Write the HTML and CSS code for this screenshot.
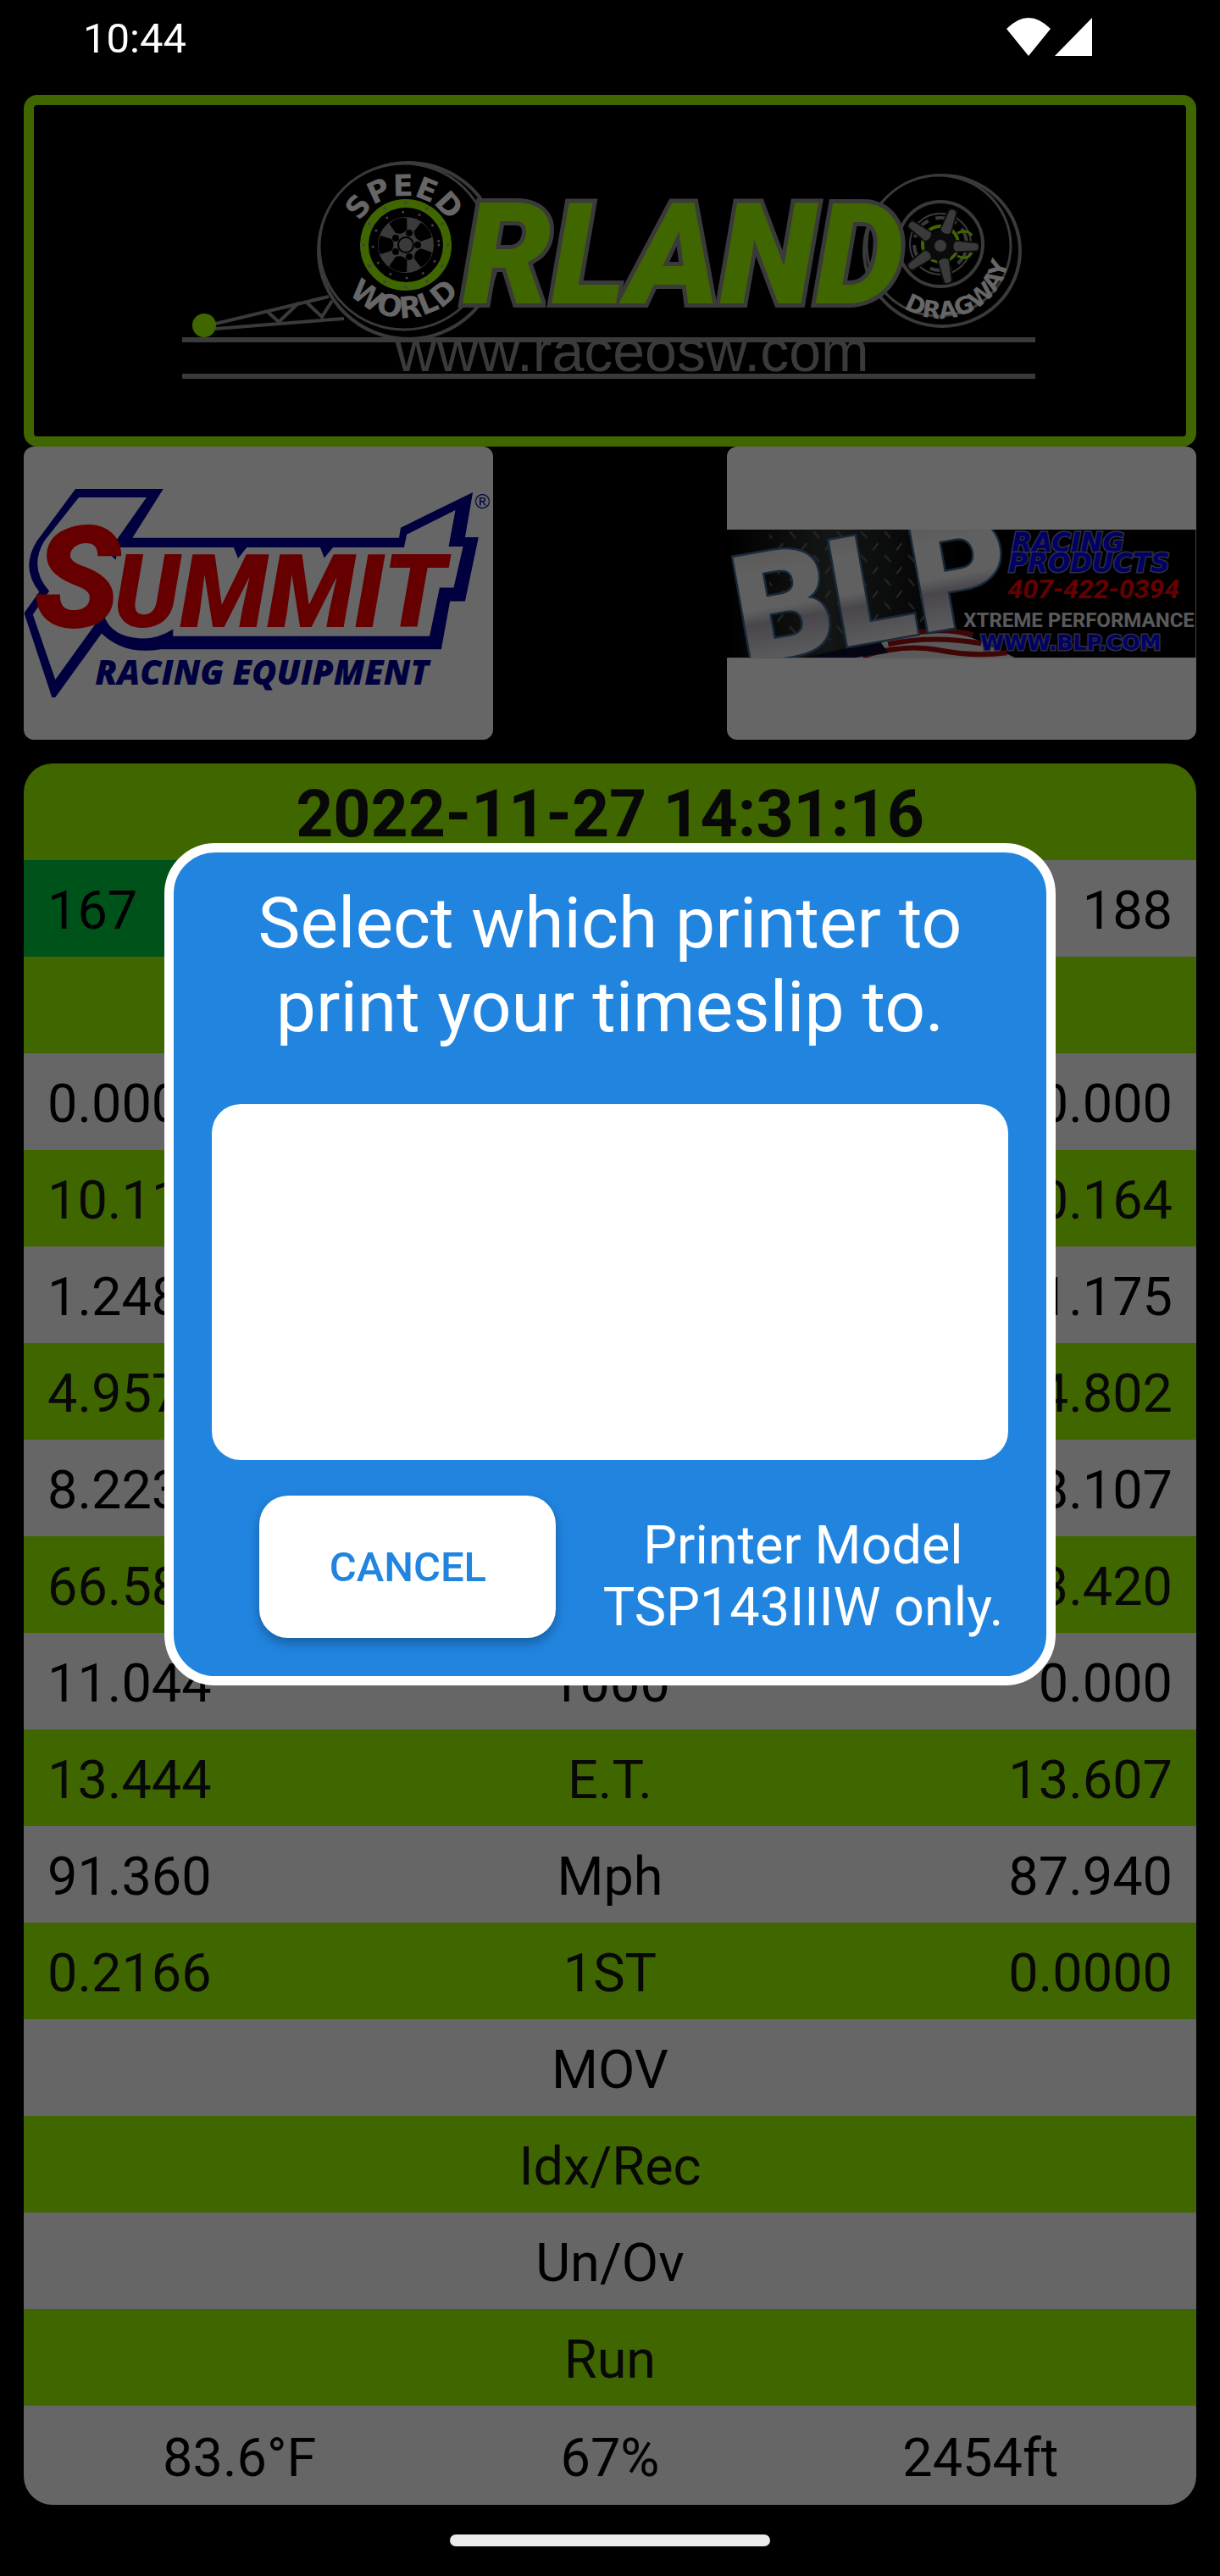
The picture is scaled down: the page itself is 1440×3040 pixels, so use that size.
FILE: index.html
```
<!DOCTYPE html>
<html lang="en">
<head>
    <meta charset="UTF-8">
    <meta name="viewport" content="width=device-width, initial-scale=1.0">
    <title>Timeslip</title>
    <link rel="stylesheet" href="styles.css">
</head>
<body>
    <div class="status-bar">
        <span>10:44</span>
        <svg class="status-icons" viewBox="0 0 102 46" aria-hidden="true">
            <path d="M0 13 Q26 -13 52 13 L26 45 Z" fill="#fff"/>
            <path d="M101 0 V45 H57 Z" fill="#fff"/>
        </svg>
    </div>

    <main>
        <!-- Track banner -->
        <div class="banner">
            <svg viewBox="40 124 1360 391" role="img" aria-label="Speed World Orlando Dragway">
                <defs>
                    <path id="speedArc" d="M417 291 A60 60 0 0 1 537 291"/>
                    <path id="worldArc" d="M391 289 A86 86 0 0 0 563 289"/>
                    <path id="dragwayArc" d="M1031 310 A80 80 0 0 0 1190 280"/>
                    <g id="rivets" fill="#aaa">
                        <circle cx="0" cy="-50" r="2"/>
                        <circle cx="25" cy="-43" r="2"/>
                        <circle cx="43" cy="-25" r="2"/>
                    </g>
                    <path id="hole" d="M-11 -30 Q0 -35 11 -30 L7 -17 Q0 -12 -7 -17 Z"/>
                    <g id="spoke">
                        <path d="M-8 -12 L-6 -46 H6 L8 -12 Z" fill="#1c1c1e"/>
                        <path d="M-6 -18 L-4 -43 Q0 -47 4 -43 L6 -18 Q0 -13 -6 -18 Z" fill="#919195"/>
                    </g>
                </defs>

                <g fill="none" stroke="#919195" stroke-width="4">
                    <path d="M254 382 L388 350 M254 388 L406 376 M316 368 L329 380 L353 357 M362 357 L380 374 L392 355"/>
                    <ellipse cx="482" cy="296" rx="106" ry="104"/>
                    <ellipse cx="477" cy="291" rx="100" ry="98" fill="#000" stroke-width="3"/>
                </g>
                <circle cx="241" cy="384" r="14" fill="#a0ff00"/>

                <circle cx="479" cy="289" r="49" fill="none" stroke="#a0ff00" stroke-width="10"/>
                <g transform="translate(479 289)">
                    <use href="#rivets"/>
                    <use href="#rivets" transform="rotate(90)"/>
                    <use href="#rivets" transform="rotate(180)"/>
                    <use href="#rivets" transform="rotate(270)"/>
                    <circle r="39" fill="none" stroke="#aaa" stroke-width="3" stroke-dasharray="0 20" stroke-linecap="round"/>
                    <circle r="33" fill="#919195"/>
                    <g fill="#000">
                        <use href="#hole" transform="rotate(-18)"/>
                        <use href="#hole" transform="rotate(54)"/>
                        <use href="#hole" transform="rotate(126)"/>
                        <use href="#hole" transform="rotate(198)"/>
                        <use href="#hole" transform="rotate(270)"/>
                        <circle cx="14" cy="0" r="4"/>
                        <circle cx="4" cy="-14" r="4"/>
                        <circle cx="-12" cy="-8" r="4"/>
                        <circle cx="-12" cy="8" r="4"/>
                        <circle cx="4" cy="14" r="4"/>
                    </g>
                    <circle r="9" fill="#919195" stroke="#000" stroke-width="2"/>
                </g>
                <text class="tyre-text"><textPath href="#speedArc" startOffset="50%">SPEED</textPath></text>
                <text class="tyre-text"><textPath href="#worldArc" startOffset="50%">WORLD</textPath></text>

                <g fill="none" stroke="#919195">
                    <ellipse cx="1112" cy="296" rx="92" ry="89" stroke-width="4"/>
                    <ellipse cx="1108" cy="290" rx="85" ry="83" fill="#000" stroke-width="3"/>
                    <circle cx="1110" cy="288" r="50" stroke-width="4"/>
                    <circle cx="1110" cy="288" r="36" stroke-width="2"/>
                    <circle cx="1110" cy="288" r="31" stroke-width="4" stroke-dasharray="26 9"/>
                    <circle cx="1110" cy="288" r="21" stroke="#a0ff00" stroke-width="4"/>
                    <path d="M1130 275 Q1142 270 1147 278 M1130 302 Q1142 308 1147 298" stroke="#a0ff00" stroke-width="3"/>
                </g>
                <g transform="translate(1110 290)">
                    <circle r="18" fill="#1c1c1e"/>
                    <use href="#spoke" transform="rotate(20)"/>
                    <use href="#spoke" transform="rotate(92)"/>
                    <use href="#spoke" transform="rotate(168)"/>
                    <use href="#spoke" transform="rotate(235)"/>
                    <use href="#spoke" transform="rotate(306)"/>
                    <circle r="7" fill="#919195"/>
                </g>
                <text class="dragway-text"><textPath href="#dragwayArc" startOffset="57%">DRAGWAY</textPath></text>

                <text class="orlando-text" x="546" y="358">RLAND</text>

                <path d="M215 401 H1222 M215 444 H1222" stroke="#919195" stroke-width="6"/>
                <text class="url-text" x="746" y="438">www.raceosw.com</text>
            </svg>
        </div>

        <!-- Sponsors -->
        <div class="sponsors">
            <a class="sponsor" href="#summit">
                <svg viewBox="0 0 553 346" role="img" aria-label="Summit Racing Equipment">
                    <g transform="translate(-28 -17) scale(0.3954 0.3333)">
                        <path fill="#00009c" d="M225 201 H487 L395 374 H1190 L1195 338 L1410 213 L1387 372 H1427 L1387 598 H1342 L1316 768 H480 Q370 790 303 712 L165 938 H155 L72 640 L117 565 Q60 480 110 385 Z"/>
                        <path fill="#fff" d="M235 231 H437 L322 425 L345 452 L353 408 H697 L710 447 L736 408 H955 L967 445 L993 408 H1205 L1213 362 L1358 276 L1338 405 H1381 L1353 550 H1311 L1281 722 H516 V697 Q460 740 400 727 Q325 715 308 640 L165 875 L98 645 L147 562 Q85 480 132 385 Z"/>
                    </g>
                    <text class="summit-s" x="12" y="213">S</text>
                    <text class="summit-text" x="106" y="213">UMMIT</text>
                    <text class="summit-sub" x="281" y="281">RACING EQUIPMENT</text>
                    <text class="summit-reg" x="532" y="73">®</text>
                </svg>
            </a>
            <a class="sponsor" href="#blp">
                <svg viewBox="0 0 553 346" role="img" aria-label="BLP Racing Products">
                    <defs>
                        <clipPath id="blpClip"><rect x="0" y="98" width="553" height="151"/></clipPath>
                        <linearGradient id="steel" x1="0" y1="0" x2="0" y2="1">
                            <stop offset="0.1" stop-color="#d8d8d8"/>
                            <stop offset="0.3" stop-color="#f0f0f0"/>
                            <stop offset="0.5" stop-color="#f0f0f0"/>
                            <stop offset="0.58" stop-color="#b5b0bd"/>
                            <stop offset="0.85" stop-color="#f4f4f4"/>
                        </linearGradient>
                        <linearGradient id="plateFade" x1="0" y1="0" x2="1" y2="0">
                            <stop offset="0" stop-color="#000"/>
                            <stop offset="0.3" stop-color="#333836"/>
                            <stop offset="0.7" stop-color="#000"/>
                        </linearGradient>
                        <pattern id="tread" width="28" height="28" patternUnits="userSpaceOnUse">
                            <path d="M4 10 L10 2 M18 16 L25 24" stroke="#666" stroke-width="2"/>
                        </pattern>
                    </defs>
                    <g clip-path="url(#blpClip)">
                        <rect x="0" y="98" width="553" height="151" fill="#000"/>
                        <rect x="0" y="98" width="400" height="151" fill="url(#plateFade)"/>
                        <rect x="50" y="98" width="190" height="130" fill="url(#tread)"/>
                        <path fill="#e0e0e0" d="M150 249 Q190 222 230 219 Q270 215 300 230 L340 249 Z"/>
                        <path fill="none" stroke="#a01010" stroke-width="6" d="M160 247 Q210 232 250 240 T330 243 M190 233 Q240 222 300 232 M225 219 Q260 214 290 222"/>
                        <path fill="#0c0c30" d="M90 249 L180 229 L190 243 L150 249 Z"/>
                        <text class="blp-text" x="20" y="257" transform="rotate(-10 20 257)">BLP</text>
                    </g>
                    <text class="blp-blue" x="336" y="124">RACING</text>
                    <text class="blp-blue" x="332" y="148">PRODUCTS</text>
                    <text class="blp-phone" x="331" y="179">407-422-0394</text>
                    <text class="blp-xtreme" x="279" y="213">XTREME PERFORMANCE</text>
                    <text class="blp-web" x="299" y="240">WWW.BLP.COM</text>
                </svg>
            </a>
        </div>

        <!-- Timeslip -->
        <div class="timeslip">
            <table>
                <thead>
                    <tr><th colspan="3">2022-11-27 14:31:16</th></tr>
                </thead>
                <tbody>
                    <tr><td class="winner">167</td><td></td><td>188</td></tr>
                    <tr><td></td><td></td><td></td></tr>
                    <tr><td>0.000</td><td></td><td>0.000</td></tr>
                    <tr><td>10.11</td><td></td><td>10.164</td></tr>
                    <tr><td>1.248</td><td></td><td>1.175</td></tr>
                    <tr><td>4.957</td><td></td><td>4.802</td></tr>
                    <tr><td>8.223</td><td></td><td>8.107</td></tr>
                    <tr><td>66.58</td><td></td><td>83.420</td></tr>
                    <tr><td>11.044</td><td>1000</td><td>0.000</td></tr>
                    <tr><td>13.444</td><td>E.T.</td><td>13.607</td></tr>
                    <tr><td>91.360</td><td>Mph</td><td>87.940</td></tr>
                    <tr><td>0.2166</td><td>1ST</td><td>0.0000</td></tr>
                    <tr><td></td><td>MOV</td><td></td></tr>
                    <tr><td></td><td>Idx/Rec</td><td></td></tr>
                    <tr><td></td><td>Un/Ov</td><td></td></tr>
                    <tr><td></td><td>Run</td><td></td></tr>
                </tbody>
            </table>
            <div class="weather">
                <span>83.6°F</span>
                <span>67%</span>
                <span>2454ft</span>
            </div>
        </div>
    </main>

    <div class="nav-bar"><div class="nav-pill"></div></div>

    <div class="overlay">
        <div class="modal" role="dialog" aria-labelledby="modalTitle">
            <h2 id="modalTitle">Select which printer to print your timeslip to.</h2>
            <div class="printer-list"></div>
            <div class="modal-footer">
                <button type="button">CANCEL</button>
                <p>Printer Model TSP143IIIW only.</p>
            </div>
        </div>
    </div>
</body>
</html>
```
FILE: styles.css
```
* {
    box-sizing: border-box;
}

body {
    font-family: Roboto, sans-serif;
    margin: 0;
    background: #000;
    color: #000;
    min-height: 100vh;
    display: flex;
    flex-direction: column;
}

.status-bar {
    height: 112px;
    padding: 18px 150px 0 98px;
    display: flex;
    justify-content: space-between;
    align-items: flex-start;
    color: #fff;
    font-size: 49px;
    line-height: 56px;
    position: relative;
    z-index: 2;
}

.status-icons {
    width: 102px;
    height: 46px;
    margin-top: 3px;
}

main {
    padding: 0 28px;
}

main svg {
    display: block;
    width: 100%;
}

.banner {
    border: 12px solid #a0ff00;
    border-radius: 16px;
}

.tyre-text,
.dragway-text {
    font-family: "DejaVu Sans", sans-serif;
    font-weight: bold;
    text-anchor: middle;
    fill: #fff;
}

.tyre-text {
    font-size: 35px;
}

.dragway-text {
    font-size: 28px;
}

.orlando-text {
    font-family: Roboto, sans-serif;
    font-weight: 900;
    font-style: italic;
    font-size: 166px;
    fill: #a0ff00;
    stroke: #919195;
    stroke-width: 10px;
    paint-order: stroke;
}

.url-text {
    font-family: "Liberation Sans", sans-serif;
    font-size: 68px;
    text-anchor: middle;
    fill: #919195;
}

.sponsors {
    display: flex;
    justify-content: space-between;
    margin-bottom: 28px;
}

.sponsor {
    width: 40%;
    background: #fff;
    border-radius: 12px;
    overflow: hidden;
}

.summit-s,
.summit-text {
    font-family: Roboto, sans-serif;
    font-weight: 900;
    font-style: italic;
    fill: #ff0000;
}

.summit-s {
    font-size: 168px;
}

.summit-text {
    font-size: 121px;
}

.summit-sub {
    font-family: "Open Sans", sans-serif;
    font-weight: 800;
    font-style: italic;
    font-size: 40px;
    text-anchor: middle;
    fill: #00009c;
}

.summit-reg {
    font-family: "Liberation Sans", sans-serif;
    font-size: 24px;
    fill: #00009c;
}

.blp-text {
    font-family: Roboto, sans-serif;
    font-weight: 900;
    font-size: 178px;
    fill: url(#steel);
    stroke: #3a6a94;
    stroke-width: 5px;
    paint-order: stroke;
}

.blp-blue,
.blp-web {
    font-family: "DejaVu Sans", sans-serif;
    font-weight: bold;
    fill: #0000ff;
    stroke: #77779a;
    stroke-width: 3px;
    paint-order: stroke;
}

.blp-blue {
    font-style: italic;
    font-size: 31px;
}

.blp-web {
    font-size: 25px;
}

.blp-phone,
.blp-xtreme {
    font-family: Roboto, sans-serif;
    font-weight: bold;
}

.blp-phone {
    font-style: italic;
    font-size: 32px;
    fill: #ff0000;
}

.blp-xtreme {
    font-size: 24px;
    fill: #e0e0e0;
}

.timeslip {
    border-radius: 34px;
    overflow: hidden;
    font-size: 63px;
    line-height: 74px;
}

table {
    width: 100%;
    border-collapse: collapse;
    table-layout: fixed;
}

tr {
    height: 114px;
    background: #fff;
}

thead tr,
tbody tr:nth-child(even) {
    background: #a0ff00;
    color: #141414;
}

th,
td {
    padding: 6px 28px 0;
    text-align: center;
}

th {
    font-size: 77px;
    font-weight: bold;
}

td:first-child {
    text-align: left;
}

td:last-child {
    text-align: right;
}

.winner {
    background: #00cc44;
}

.weather {
    height: 117px;
    padding: 6px 36px 0;
    display: grid;
    grid-template-columns: repeat(3, 1fr);
    align-items: center;
    text-align: center;
    background: #fff;
}

.nav-bar {
    flex: 1;
    min-height: 83px;
    display: flex;
    justify-content: center;
    align-items: center;
    position: relative;
    z-index: 2;
}

.nav-pill {
    width: 378px;
    height: 14px;
    border-radius: 7px;
    background: #ebebeb;
}

.overlay {
    position: fixed;
    inset: 0;
    padding-bottom: 56px;
    background: rgba(0, 0, 0, 0.6);
    display: flex;
    justify-content: center;
    align-items: center;
    z-index: 1;
}

.modal {
    width: 73%;
    padding: 34px 45px 45px;
    border: 11px solid #fff;
    border-radius: 60px;
    background: #2185e0;
    color: #fff;
    text-align: center;
}

.modal h2 {
    max-width: 880px;
    margin: 0 auto 65px;
    font-size: 84px;
    font-weight: normal;
    line-height: 99px;
}

.printer-list {
    height: 420px;
    margin-bottom: 42px;
    border-radius: 34px;
    background: #fff;
}

.modal-footer {
    display: flex;
    align-items: flex-end;
    gap: 50px;
    padding-left: 56px;
}

.modal-footer button {
    width: 350px;
    height: 168px;
    border: none;
    border-radius: 34px;
    background: #fff;
    color: #2185e0;
    font-family: inherit;
    font-size: 49px;
    font-weight: 500;
    box-shadow: 0 6px 14px rgba(0, 0, 0, 0.3);
    cursor: pointer;
}

.modal-footer p {
    flex: 1;
    margin: 0;
    font-size: 63px;
    line-height: 73px;
}
```
